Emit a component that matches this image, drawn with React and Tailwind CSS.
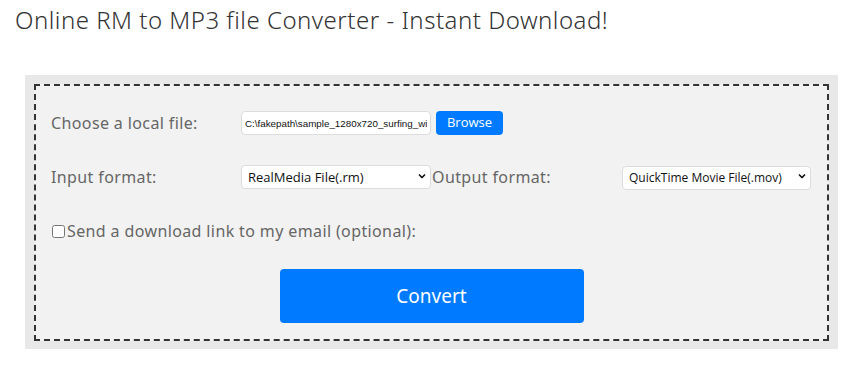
import React from "react";

const Chevron = () => (
  <svg
    width="8"
    height="5"
    viewBox="0 0 8 5"
    className="pointer-events-none absolute right-[5px] top-1/2 -translate-y-1/2"
  >
    <path d="M1 1l3 3 3-3" fill="none" stroke="#111" strokeWidth="1.6" />
  </svg>
);

const Select = ({ value, options, className, textSize }) => (
  <div className={`relative h-[24px] ${className}`}>
    <select
      defaultValue={value}
      className={`h-full w-full appearance-none rounded-[4px] border border-[#dcdcdc] bg-white pl-[6px] pr-[16px] font-['Open_Sans',sans-serif] text-[#111] outline-none ${textSize}`}
    >
      {options.map((o) => (
        <option key={o}>{o}</option>
      ))}
    </select>
    <Chevron />
  </div>
);

const App = () => {
  return (
    <div className="min-h-[370px] bg-white font-['Noto_Sans',sans-serif]">
      <h1 className="pl-[15px] pt-[4px] text-[24px] font-light leading-[32px] tracking-[0.5px] text-[#333]">
        Online RM to MP3 file Converter - Instant Download!
      </h1>

      <div className="ml-[25px] mt-[39px] w-[813px] bg-[#e8e8e8] p-[9px] pb-[8px]">
        <div className="border-2 border-dashed border-[#333] bg-[#f2f2f2] px-[15px] pt-[25px] pb-[16px] tracking-[0.38px]">
          <div className="grid h-[24px] grid-cols-[190px_191px_190px_190px] items-center">
            <label className="text-[16px] text-[#666]">Choose a local file:</label>
            <div className="col-span-3 flex items-center tracking-normal">
              <input
                type="text"
                readOnly
                value="C:\fakepath\sample_1280x720_surfing_with_audio.rm"
                className="h-[24px] w-[190px] rounded-[4px] border border-[#dcdcdc] bg-white px-[3px] font-['Liberation_Sans',Arial,sans-serif] text-[9.8px] text-[#111] outline-none"
              />
              <button className="ml-[5px] h-[24px] w-[67px] rounded-[4px] bg-[#007bff] font-['Open_Sans',sans-serif] text-[13px] font-medium text-white">
                Browse
              </button>
            </div>
          </div>

          <div className="mt-[27px] grid h-[24px] grid-cols-[190px_191px_190px_190px] items-center">
            <label className="pt-[3px] text-[16px] text-[#666]">Input format:</label>
            <Select
              value="RealMedia File(.rm)"
              options={["RealMedia File(.rm)"]}
              className="w-[190px] tracking-normal"
              textSize="text-[13px]"
            />
            <label className="pt-[3px] text-[16px] text-[#666]">Output format:</label>
            <Select
              value="QuickTime Movie File(.mov)"
              options={["QuickTime Movie File(.mov)", "MP3 Audio(.mp3)"]}
              className="w-[189px] tracking-normal"
              textSize="text-[12px]"
            />
          </div>

          <div className="mt-[33px] flex h-[24px] items-center">
            <input type="checkbox" className="m-0 ml-[1px] h-[13px] w-[13px]" />
            <span className="ml-[2px] text-[16px] text-[#666]">
              Send a download link to my email (optional):
            </span>
          </div>

          <button className="mx-auto mt-[26px] block h-[54px] w-[304px] rounded-[4px] bg-[#007bff] text-[19px] tracking-normal text-white">
            Convert
          </button>
        </div>
      </div>
    </div>
  );
};

export default App;
